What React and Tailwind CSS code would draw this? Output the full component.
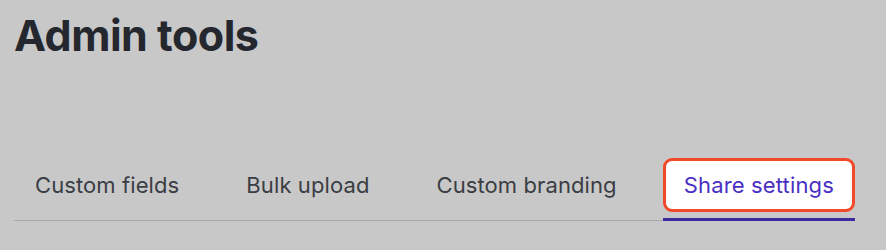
export default function App() {
  const tabs = ["Custom fields", "Bulk upload", "Custom branding", "Share settings"];
  const active = 3;
  return (
    <div className="w-[886px] h-[250px] bg-[#c8c8c8] pl-[14px] pr-[31px] font-['Inter',sans-serif] overflow-hidden">
      <h1 className="pt-[7px] text-[43px] leading-[56px] font-bold tracking-[-0.5px] text-[#24272e]">Admin tools</h1>
      <div className="mt-[95px] flex gap-[25px] border-b border-[#a8a8a8] whitespace-nowrap">
        {tabs.map((t, i) =>
          i === active ? (
            <div key={t} className="flex flex-col shrink-0">
              <div className="h-[54px] px-[18px] flex items-center bg-white border-[3px] border-[#f2492a] rounded-[9px] text-[22px] tracking-[0.15px] text-[#4a2fc4]">
                {t}
              </div>
              <div className="mt-[6px] -mb-px h-[3px] bg-[#3d2aa0]" />
            </div>
          ) : (
            <div key={t} className="flex flex-col shrink-0">
              <div className="h-[54px] px-[21px] flex items-center text-[22px] tracking-[0.1px] text-[#3a3d44]">{t}</div>
              <div className="mt-[6px] h-[2px]" />
            </div>
          )
        )}
      </div>
    </div>
  );
}
